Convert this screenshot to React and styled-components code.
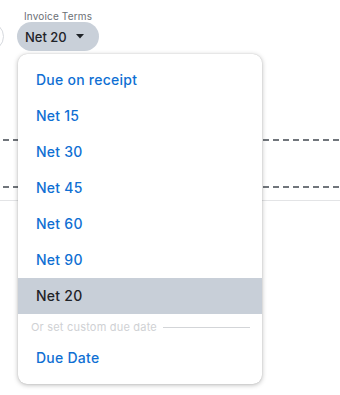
import React from "react";
import styled, { createGlobalStyle } from "styled-components";

const Global = createGlobalStyle`
  html, body { margin: 0; padding: 0; background: #fff; }
  body { font-family: Inter, "Noto Sans", sans-serif; }
`;

const Page = styled.div`
  position: relative;
  width: 340px;
  height: 395px;
  overflow: hidden;
  background: #fff;
`;

const Toolbar = styled.div`
  display: flex;
  align-items: flex-end;
  gap: 13px;
  padding-top: 10px;
  margin-left: -40px;
`;

const GhostPill = styled.div`
  width: 44px;
  height: 29px;
  border: 1px solid #d6d9de;
  border-radius: 15px;
  box-sizing: border-box;
`;

const Field = styled.div`
  display: flex;
  flex-direction: column;
  align-items: flex-start;
`;

const Label = styled.div`
  font-size: 10px;
  line-height: 12px;
  color: #6b6f75;
  margin-left: 7px;
  letter-spacing: 0.15px;
`;

const Pill = styled.button`
  display: flex;
  align-items: center;
  gap: 9px;
  height: 29px;
  width: 82px;
  padding: 0 0 0 8px;
  border: none;
  border-radius: 15px;
  background: #c9d0d9;
  color: #1f2328;
  font-family: Inter, "Noto Sans", sans-serif;
  font-size: 13px;
  font-weight: 500;
`;

const Dashed = styled.div`
  height: 2px;
  margin-top: ${(p) => p.$top}px;
  background-image: linear-gradient(to right, #70757b 0 6px, transparent 6px 10px);
  background-size: 10px 2px;
  background-position: 3px 0;
`;

const Rule = styled.div`
  height: 1px;
  margin-top: 12px;
  background: #e3e4e6;
`;

const Menu = styled.div`
  position: absolute;
  top: 54px;
  left: 18px;
  width: 244px;
  height: 330px;
  box-sizing: border-box;
  padding: 8px 0;
  background: #fff;
  border-radius: 9px;
  box-shadow: 0 1px 5px rgba(0, 0, 0, 0.28), 0 0 1px rgba(0, 0, 0, 0.2);
  display: flex;
  flex-direction: column;
`;

const Item = styled.div`
  height: 36px;
  display: flex;
  align-items: center;
  padding-left: 18px;
  font-size: 14px;
  font-weight: 500;
  letter-spacing: 0.25px;
  padding-bottom: 1px;
  box-sizing: border-box;
  color: ${(p) => (p.$active ? "#1f2328" : "#0f6fd3")};
  background: ${(p) => (p.$active ? "#c8cfd8" : "transparent")};
`;

const Divider = styled.div`
  height: 26px;
  display: flex;
  align-items: center;
  gap: 6px;
  padding: 0 12px 0 13px;
  font-size: 11px;
  letter-spacing: 0.2px;
  color: #cfd1d4;
  white-space: nowrap;
  &::after {
    content: "";
    flex: 1;
    height: 1px;
    background: #d3d5d8;
  }
`;

const Caret = () => (
  <svg width="8" height="5" viewBox="0 0 8 5">
    <path d="M0 0H8L4 4.5Z" fill="#1f2328" />
  </svg>
);

const options = ["Due on receipt", "Net 15", "Net 30", "Net 45", "Net 60", "Net 90", "Net 20"];

export default function App() {
  return (
    <Page>
      <Global />
      <Toolbar>
        <GhostPill />
        <Field>
          <Label>Invoice Terms</Label>
          <Pill>
            Net 20 <Caret />
          </Pill>
        </Field>
      </Toolbar>
      <Dashed $top={88} />
      <Dashed $top={45} />
      <Rule />
      <Menu>
        {options.map((o) => (
          <Item key={o} $active={o === "Net 20"}>
            {o}
          </Item>
        ))}
        <Divider>Or set custom due date</Divider>
        <Item>Due Date</Item>
      </Menu>
    </Page>
  );
}
